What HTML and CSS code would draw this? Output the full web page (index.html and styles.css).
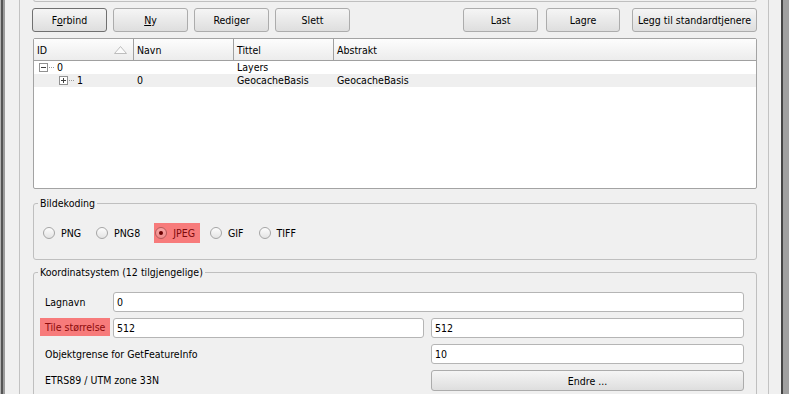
FILE: index.html
```html
<!DOCTYPE html>
<html lang="nb">
<head>
    <meta charset="UTF-8">
    <meta name="viewport" content="width=device-width, initial-scale=1.0">
    <title>WMS-tjenere</title>
    <link rel="stylesheet" href="styles.css">
</head>
<body>
<div class="frame">
    <div class="edge-left"></div>

    <div class="panel">
        <div class="prev-box"></div>

        <div class="button-row">
            <button class="btn default">F<u>o</u>rbind</button>
            <button class="btn"><u>N</u>y</button>
            <button class="btn">Rediger</button>
            <button class="btn">Slett</button>
            <span class="spacer"></span>
            <button class="btn">Last</button>
            <button class="btn btn-narrow">Lagre</button>
            <button class="btn btn-wide">Legg til standardtjenere</button>
        </div>

        <div class="tree">
            <div class="tree-header">
                <div class="col">ID
                    <svg class="sort-arrow" width="13" height="8" viewBox="0 0 13 8">
                        <polygon points="0.5,7.5 6.5,0.5 12.5,7.5" fill="#fbfbfb" stroke="#bdbdbd"/>
                    </svg>
                </div>
                <div class="col">Navn</div>
                <div class="col">Tittel</div>
                <div class="col col-last">Abstrakt</div>
            </div>

            <div class="tree-row">
                <div class="cell cell-id">
                    <svg class="expander" width="18" height="9" viewBox="0 0 18 9">
                        <rect x="0.5" y="0.5" width="8" height="8" fill="#fff" stroke="#919191"/>
                        <line x1="2" y1="4.5" x2="7" y2="4.5" stroke="#404040"/>
                        <rect x="10" y="4" width="1" height="1" fill="#9a9a9a"/>
                        <rect x="12" y="4" width="1" height="1" fill="#9a9a9a"/>
                        <rect x="14" y="4" width="1" height="1" fill="#9a9a9a"/>
                    </svg>0
                </div>
                <div class="cell"></div>
                <div class="cell">Layers</div>
                <div class="cell"></div>
            </div>

            <div class="tree-row alt">
                <div class="cell cell-id level-2">
                    <svg class="expander" width="18" height="9" viewBox="0 0 18 9">
                        <rect x="0.5" y="0.5" width="8" height="8" fill="#fff" stroke="#919191"/>
                        <line x1="2" y1="4.5" x2="7" y2="4.5" stroke="#404040"/>
                        <line x1="4.5" y1="2" x2="4.5" y2="7" stroke="#404040"/>
                        <rect x="10" y="4" width="1" height="1" fill="#9a9a9a"/>
                        <rect x="12" y="4" width="1" height="1" fill="#9a9a9a"/>
                        <rect x="14" y="4" width="1" height="1" fill="#9a9a9a"/>
                    </svg>1
                </div>
                <div class="cell">0</div>
                <div class="cell">GeocacheBasis</div>
                <div class="cell">GeocacheBasis</div>
            </div>
        </div>

        <fieldset class="group group-encoding">
            <legend>Bildekoding</legend>
            <div class="radio-row">
                <label class="radio"><span class="circle"></span>PNG</label>
                <label class="radio"><span class="circle"></span>PNG8</label>
                <label class="radio highlight"><span class="circle checked"></span>JPEG</label>
                <label class="radio"><span class="circle"></span>GIF</label>
                <label class="radio"><span class="circle"></span>TIFF</label>
            </div>
        </fieldset>

        <fieldset class="group group-crs">
            <legend>Koordinatsystem (12 tilgjengelige)</legend>
            <div class="form-grid">
                <span class="label">Lagnavn</span>
                <input class="field span-2" type="text" value="0">

                <span class="label highlight">Tile størrelse</span>
                <input class="field field-mid" type="text" value="512">
                <input class="field" type="text" value="512">

                <span class="label span-label">Objektgrense for GetFeatureInfo</span>
                <input class="field" type="text" value="10">

                <span class="label span-label">ETRS89 / UTM zone 33N</span>
                <button class="btn btn-full">Endre ...</button>
            </div>
        </fieldset>
    </div>

    <div class="edge-right"></div>
</div>
</body>
</html>
```

FILE: styles.css
```css
body {
    margin: 0;
    height: 394px;
    overflow: hidden;
    background-color: #f0f0f0;
    font-family: "DejaVu Sans Condensed", "Liberation Sans", Arial, sans-serif;
    font-size: 10.5px;
    color: #000;
}
.frame {
    display: flex;
    height: 394px;
}
.edge-left {
    width: 5px;
    flex: none;
    background: linear-gradient(to right, #b4b4b4 0 1px, #555 1px 3px, #9c9c9c 3px 5px);
}
.edge-right {
    width: 9px;
    flex: none;
    margin-left: 11px;
    background: linear-gradient(to right, #f0f0f0 0 1px, #454545 1px 3px, #a0a0a0 3px 9px);
}
.panel {
    width: 724px;
    flex: none;
    margin-left: 14px;
    padding: 0 11px 0 13px;
    border-left: 1px solid #c2c2c2;
    border-right: 1px solid #c2c2c2;
}
.prev-box {
    height: 3px;
    margin-top: -2px;
    border: 1px solid #bfbfbf;
    border-top: none;
    border-radius: 0 0 3px 3px;
}

/* Buttons */
.button-row {
    display: flex;
    gap: 6px;
    height: 24px;
    margin: 6px 0 0 -1px;
}
.spacer {
    flex: 1;
}
.btn {
    width: 75px;
    height: 24px;
    padding: 0;
    border: 1px solid #acacac;
    border-radius: 3px;
    background: linear-gradient(#f5f5f5, #dedede);
    font-family: inherit;
    font-size: inherit;
    color: #000;
}
.btn.default {
    border-color: #707070;
}
.btn-narrow {
    width: 74px;
    margin-left: 2px;
    margin-right: 6px;
}
.btn-wide {
    width: 125px;
}
.btn-full {
    width: 100%;
    height: 21px;
}

/* Tree view */
.tree {
    height: 149px;
    margin-top: 6px;
    border: 1px solid #a3a3a3;
    border-radius: 2px;
    background-color: #fff;
}
.tree-header,
.tree-row {
    display: grid;
    grid-template-columns: 100px 100px 100px 1fr;
}
.tree-header {
    height: 21px;
    border-bottom: 1px solid #a0a0a0;
}
.col {
    display: flex;
    align-items: center;
    padding-left: 3px;
    border-right: 1px solid #a0a0a0;
    background: linear-gradient(#fdfdfd, #ececec);
}
.col-last {
    border-right: none;
}
.sort-arrow {
    margin-left: auto;
    margin-right: 6px;
}
.tree-row {
    height: 13px;
    line-height: 13px;
}
.tree-row.alt {
    background-color: #efefef;
}
.cell {
    padding-left: 3px;
    white-space: nowrap;
}
.cell-id {
    display: flex;
    align-items: center;
    padding-left: 5px;
}
.cell-id.level-2 {
    padding-left: 25px;
}
.expander {
    flex: none;
}

/* Group boxes */
.group {
    margin: 0;
    padding: 0 12px 0 4px;
    border: 1px solid #bfbfbf;
    border-radius: 3px;
    min-width: 0;
}
.group legend {
    padding: 0 2px;
    line-height: 13px;
}
.group-encoding {
    margin-top: 8px;
    padding-top: 13px;
    padding-bottom: 16px;
}
.group-crs {
    margin-top: 6px;
    padding-top: 13px;
    padding-bottom: 20px;
}

/* Radio buttons */
.radio-row {
    display: flex;
    gap: 9px;
    height: 20px;
    padding-left: 4px;
}
.radio {
    display: flex;
    align-items: center;
    gap: 6px;
    padding: 0 5px 0 1px;
}
.circle {
    width: 10px;
    height: 10px;
    border: 1px solid #a5a5a5;
    border-radius: 50%;
    background: linear-gradient(#fdfdfd, #e4e4e4);
    position: relative;
}
.radio.highlight {
    background-color: #f77b7b;
    color: #7d0a0a;
}
.radio.highlight .circle {
    border-color: #b55a5a;
    background: linear-gradient(#f9a5a5, #ef8a8a);
}
.circle.checked::after {
    content: "";
    position: absolute;
    left: 3px;
    top: 3px;
    width: 4px;
    height: 4px;
    border-radius: 50%;
    background-color: #6a0000;
}

/* Coordinate system form */
.form-grid {
    display: grid;
    grid-template-columns: 73px 318px 1fr;
    grid-auto-rows: 20px;
    row-gap: 6px;
    padding-left: 2px;
}
.label {
    display: flex;
    align-items: center;
    padding-left: 5px;
    white-space: nowrap;
}
.label.highlight {
    width: 65px;
    height: 18px;
    background-color: #f77b7b;
    color: #8c0a0a;
}
.span-label {
    grid-column: 1 / 3;
}
.span-2 {
    grid-column: 2 / 4;
}
.field {
    box-sizing: border-box;
    height: 20px;
    padding: 0 3px;
    border: 1px solid #b5b5b5;
    border-radius: 3px;
    background-color: #fff;
    font-family: inherit;
    font-size: inherit;
    color: #000;
    min-width: 0;
}
.field-mid {
    margin-right: 7px;
}
```
